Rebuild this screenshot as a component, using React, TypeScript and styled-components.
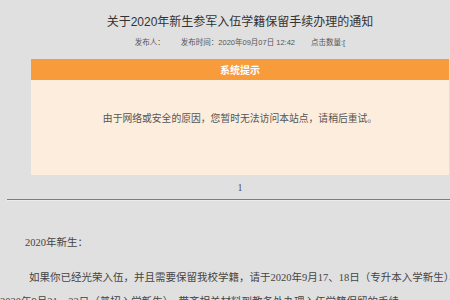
import styled, { createGlobalStyle } from "styled-components";

const GlobalStyle = createGlobalStyle`
  html, body {
    margin: 0;
    padding: 0;
    background: #e0e0e0;
    overflow: hidden;
  }
  body {
    width: 450px;
    height: 300px;
    font-family: "Noto Sans CJK SC", "Liberation Sans", sans-serif;
  }
`;

const Page = styled.div(() => ({
  width: "450px",
  height: "300px",
  overflow: "hidden",
  paddingTop: "13px",
  boxSizing: "border-box",
}));

const Column = styled.div(() => ({
  marginLeft: "31px",
  width: "418px",
}));

const Title = styled.h1(() => ({
  margin: 0,
  textAlign: "center",
  fontSize: "12px",
  lineHeight: "18px",
  fontWeight: 400,
  color: "#333",
  fontFamily: '"Liberation Sans", "Noto Sans CJK SC", sans-serif',
}));

const Meta = styled.div(() => ({
  display: "flex",
  justifyContent: "center",
  gap: "16px",
  marginTop: "7px",
  fontSize: "7.5px",
  lineHeight: "10px",
  color: "#555",
  fontFamily: '"Liberation Sans", "Noto Sans CJK SC", sans-serif',
}));

const NoticeBox = styled.div(() => ({
  marginTop: "11px",
  background: "#fdeddc",
}));

const BoxHead = styled.div(() => ({
  height: "21px",
  background: "#f89b3b",
  color: "#fff",
  fontSize: "10px",
  fontWeight: 700,
  display: "flex",
  alignItems: "center",
  justifyContent: "center",
}));

const BoxBody = styled.div(() => ({
  height: "95px",
  display: "flex",
  alignItems: "center",
  justifyContent: "center",
  paddingBottom: "20px",
  boxSizing: "border-box",
  fontSize: "9.8px",
  color: "#555",
  fontFamily: '"Liberation Serif", "Noto Sans CJK SC", serif',
}));

const PageNum = styled.div(() => ({
  height: "24px",
  display: "flex",
  alignItems: "center",
  justifyContent: "center",
  fontSize: "10px",
  color: "#555",
  fontFamily: '"Liberation Serif", serif',
}));

const Rule = styled.div(() => ({
  marginLeft: "7px",
  height: "1px",
  background: "#7d7d7d",
  borderBottom: "1px solid #ececec",
}));

const Article = styled.div(() => ({
  marginTop: "32px",
  width: "480px",
  color: "#444",
  fontSize: "10.5px",
  fontFamily: '"Liberation Serif", "Noto Sans CJK SC", serif',
}));

const Greeting = styled.p(() => ({
  margin: "0 0 0 25px",
  lineHeight: "20px",
}));

const Paragraph = styled.p(() => ({
  margin: "13px 0 0 0",
  textIndent: "29px",
  lineHeight: "24px",
}));

export default function App() {
  return (
    <Page>
      <GlobalStyle />
      <Column>
        <Title>关于2020年新生参军入伍学籍保留手续办理的通知</Title>
        <Meta>
          <span>发布人：</span>
          <span>发布时间：2020年09月07日 12:42</span>
          <span>点击数量:[</span>
        </Meta>
        <NoticeBox>
          <BoxHead>系统提示</BoxHead>
          <BoxBody>由于网络或安全的原因，您暂时无法访问本站点，请稍后重试。</BoxBody>
        </NoticeBox>
        <PageNum>1</PageNum>
      </Column>
      <Rule />
      <Article>
        <Greeting>2020年新生：</Greeting>
        <Paragraph>
          如果你已经光荣入伍，并且需要保留我校学籍，请于2020年9月17、18日（专升本入学新生）、2020年9月21、22日（普招入学新生），带齐相关材料到教务处办理入伍学籍保留的手续。
        </Paragraph>
      </Article>
    </Page>
  );
}
